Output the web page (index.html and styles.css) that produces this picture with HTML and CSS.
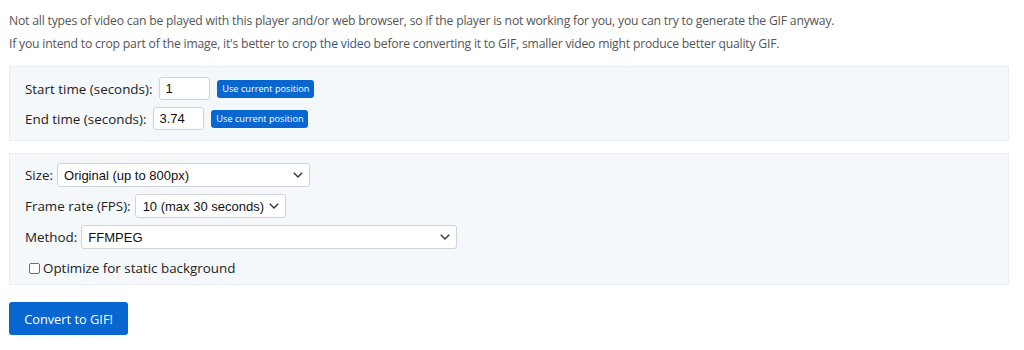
FILE: index.html
```html
<!DOCTYPE html>
<html>
<head>
<meta charset="utf-8">
<link rel="stylesheet" href="styles.css">
</head>
<body>
<div class="page">
  <p class="note">Not all types of video can be played with this player and/or web browser, so if the player is not working for you, you can try to generate the GIF anyway.</p>
  <p class="note">If you intend to crop part of the image, it's better to <a href="#" class="link">crop the video</a> before converting it to GIF, smaller video might produce better quality GIF.</p>

  <div class="panel panel-time">
    <div class="row">
      <label class="lbl">Start time (seconds):</label>
      <input class="num" type="text" value="1">
      <button class="btn-sm">Use current position</button>
    </div>
    <div class="row">
      <label class="lbl">End time (seconds):</label>
      <input class="num" type="text" value="3.74">
      <button class="btn-sm">Use current position</button>
    </div>
  </div>

  <div class="panel panel-opts">
    <div class="row row-sel">
      <label class="lbl">Size:</label>
      <div class="sel sel-size">
        <select><option>Original (up to 800px)</option></select>
        <svg class="chev" width="10" height="6" viewBox="0 0 10 6"><path d="M0.8 0.8 L5 5 L9.2 0.8" fill="none" stroke="#333" stroke-width="1.4"/></svg>
      </div>
    </div>
    <div class="row row-sel">
      <label class="lbl">Frame rate (FPS):</label>
      <div class="sel sel-fps">
        <select><option>10 (max 30 seconds)</option></select>
        <svg class="chev" width="10" height="6" viewBox="0 0 10 6"><path d="M0.8 0.8 L5 5 L9.2 0.8" fill="none" stroke="#333" stroke-width="1.4"/></svg>
      </div>
    </div>
    <div class="row row-sel">
      <label class="lbl">Method:</label>
      <div class="sel sel-method">
        <select><option>FFMPEG</option></select>
        <svg class="chev" width="10" height="6" viewBox="0 0 10 6"><path d="M0.8 0.8 L5 5 L9.2 0.8" fill="none" stroke="#333" stroke-width="1.4"/></svg>
      </div>
    </div>
    <label class="check">
      <span class="box"></span>
      <span>Optimize for static background</span>
    </label>
  </div>

  <button class="btn-main">Convert to GIF!</button>
</div>
</body>
</html>
```

FILE: styles.css
```css
html, body {
  margin: 0;
  padding: 0;
  background: #fff;
}
.page {
  padding: 9px 0 0 9px;
  width: 1000px;
  font-family: "Open Sans", "Noto Sans", sans-serif;
  color: #212529;
}
.note {
  margin: 0;
  font-size: 12.2px;
  letter-spacing: -0.2px;
  line-height: 23px;
  color: #555;
}
.link {
  color: #2c5a8c;
  text-decoration: none;
}
.panel {
  background: #f5f8fb;
  border: 1px solid #e9edf1;
  box-sizing: border-box;
}
.panel-time {
  margin-top: 11px;
  height: 75px;
  padding: 10px 15px 0 15px;
  display: flex;
  flex-direction: column;
  gap: 7px;
}
.row {
  display: flex;
  align-items: center;
}
.lbl {
  font-size: 13.4px;
  color: #222;
  margin-right: 7px;
}
.num {
  width: 51px;
  height: 23px;
  box-sizing: border-box;
  border: 1px solid #d0d4d8;
  border-radius: 3px;
  padding: 0 5px;
  font-family: "Liberation Sans", Arial, sans-serif;
  font-size: 13px;
  color: #111;
  background: #fff;
  outline: none;
}
.btn-sm {
  margin-left: 7px;
  height: 18px;
  width: 97px;
  padding: 0;
  border: none;
  border-radius: 3px;
  background: #0866d0;
  color: #fff;
  font-family: "Open Sans", sans-serif;
  font-size: 9.2px;
  line-height: 18px;
}
.panel-opts {
  margin-top: 12px;
  height: 132px;
  padding: 9px 15px 0 15px;
  display: flex;
  flex-direction: column;
  gap: 7px;
}
.row-sel .lbl {
  margin-right: 4px;
}
.sel {
  height: 24px;
  box-sizing: border-box;
  border: 1px solid #d0d4d8;
  border-radius: 3px;
  background: #fff;
  display: flex;
  align-items: center;
  padding-right: 6px;
}
.sel select {
  appearance: none;
  -webkit-appearance: none;
  border: none;
  background: transparent;
  flex: 1;
  height: 22px;
  padding: 0 0 0 6px;
  font-family: "Liberation Sans", Arial, sans-serif;
  font-size: 13px;
  color: #111;
  outline: none;
}
.chev {
  display: block;
}
.sel-size { width: 253px; }
.sel-fps { width: 151px; }
.sel-fps select { padding-left: 7px; }
.sel-method { width: 376px; }
.check {
  display: flex;
  align-items: center;
  gap: 3px;
  margin-left: 4px;
  margin-top: 3px;
  font-size: 13.4px;
  color: #222;
}
.box {
  width: 11px;
  height: 11px;
  box-sizing: border-box;
  border: 1px solid #6b6f73;
  border-radius: 2px;
  background: #fff;
}
.btn-main {
  margin-top: 17px;
  width: 119px;
  height: 33px;
  border: none;
  border-radius: 3px;
  background: #0866d0;
  color: #fff;
  font-family: "Open Sans", sans-serif;
  font-size: 12.8px;
  padding: 0;
}
```
